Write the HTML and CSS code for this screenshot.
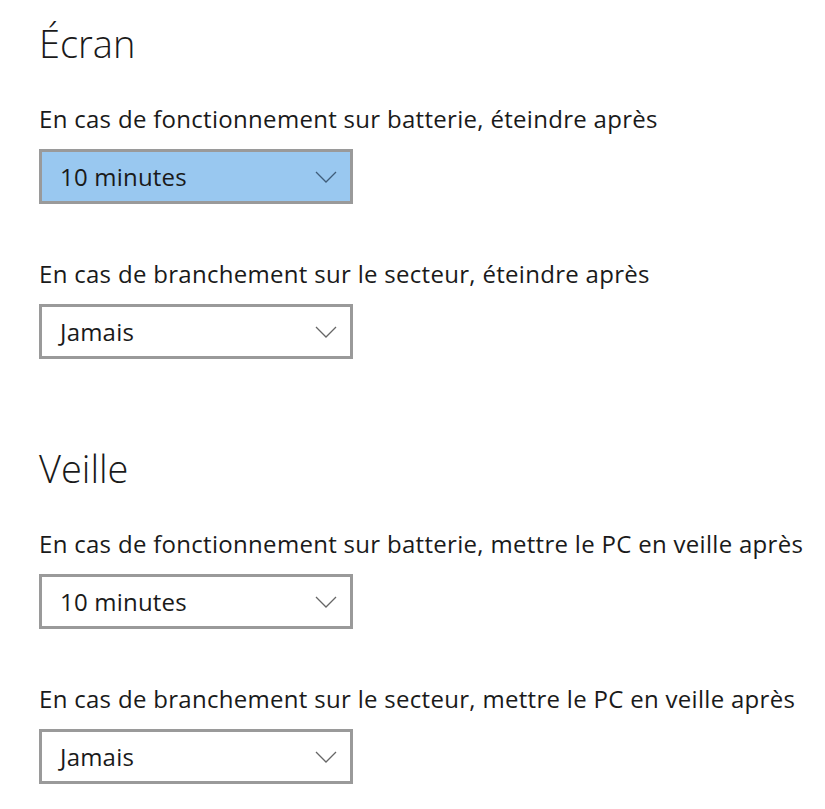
FILE: index.html
```html
<!DOCTYPE html>
<html lang="fr">
<head>
  <meta charset="UTF-8">
  <title>Alimentation et mise en veille</title>
  <link rel="stylesheet" href="styles.css">
</head>
<body>
  <div class="page">
    <div class="group">
      <h2>Écran</h2>
      <div class="setting">
        <p class="label">En cas de fonctionnement sur batterie, éteindre après</p>
        <div class="select active">
          <span>10 minutes</span>
          <svg class="chevron" width="22" height="12" viewBox="0 0 22 12"><path d="M1 1 L11 11 L21 1" fill="none" stroke="currentColor" stroke-width="1.3"/></svg>
        </div>
      </div>
      <div class="setting">
        <p class="label">En cas de branchement sur le secteur, éteindre après</p>
        <div class="select">
          <span>Jamais</span>
          <svg class="chevron" width="22" height="12" viewBox="0 0 22 12"><path d="M1 1 L11 11 L21 1" fill="none" stroke="currentColor" stroke-width="1.3"/></svg>
        </div>
      </div>
    </div>

    <div class="group">
      <h2>Veille</h2>
      <div class="setting">
        <p class="label">En cas de fonctionnement sur batterie, mettre le PC en veille après</p>
        <div class="select">
          <span>10 minutes</span>
          <svg class="chevron" width="22" height="12" viewBox="0 0 22 12"><path d="M1 1 L11 11 L21 1" fill="none" stroke="currentColor" stroke-width="1.3"/></svg>
        </div>
      </div>
      <div class="setting">
        <p class="label">En cas de branchement sur le secteur, mettre le PC en veille après</p>
        <div class="select">
          <span>Jamais</span>
          <svg class="chevron" width="22" height="12" viewBox="0 0 22 12"><path d="M1 1 L11 11 L21 1" fill="none" stroke="currentColor" stroke-width="1.3"/></svg>
        </div>
      </div>
    </div>
  </div>
</body>
</html>
```

FILE: styles.css
```css
body {
  margin: 0;
  background-color: white;
  font-family: "Open Sans", "Noto Sans", sans-serif;
  color: #1a1a1a;
}
.page {
  padding: 18px 0 0 39px;
}
.group + .group {
  margin-top: 84px;
}
h2 {
  font-weight: 300;
  font-size: 38px;
  margin: 0 0 36px 0;
  line-height: 50px;
}
.setting + .setting {
  margin-top: 55px;
}
.label {
  font-size: 24px;
  margin: 0 0 15px 0;
  line-height: 30px;
  letter-spacing: 0.3px;
  white-space: nowrap;
}
.select {
  box-sizing: border-box;
  width: 314px;
  height: 55px;
  border: 3px solid #9a9a9a;
  display: flex;
  align-items: center;
  justify-content: space-between;
  padding: 0 13px 0 18px;
  font-size: 24px;
  letter-spacing: 0.2px;
  color: #1a1a1a;
}
.select.active {
  background-color: #99c8f0;
}
.chevron {
  color: #666;
}
.select.active .chevron {
  color: #3f5d7a;
}
```
